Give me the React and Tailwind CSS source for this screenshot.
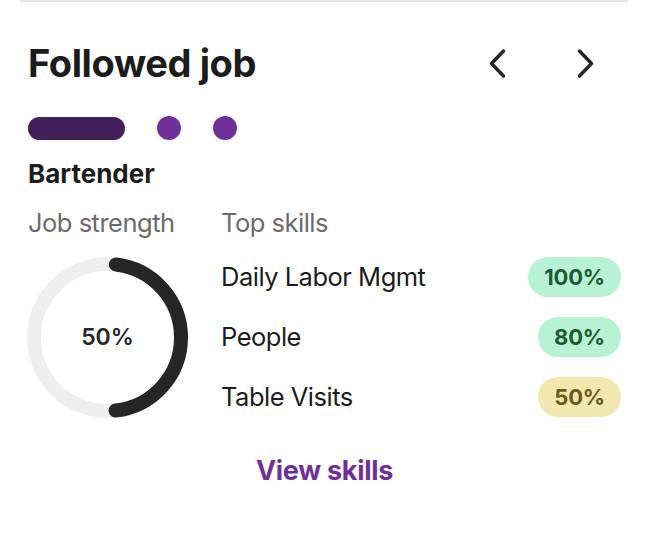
import React from 'react';

const skills = [
  { name: 'Daily Labor Mgmt', pct: '100%', tone: 'green' },
  { name: 'People', pct: '80%', tone: 'green' },
  { name: 'Table Visits', pct: '50%', tone: 'yellow' },
];

function Ring({ value }) {
  const r = 73.5;
  const c = 2 * Math.PI * r;
  // keep the round caps inside the filled half
  const inset = 8.5;
  return (
    <div className="relative w-[161px] h-[161px]">
      <svg width="161" height="161" viewBox="0 0 161 161">
        <circle cx="80.5" cy="80.5" r={r} fill="none" stroke="#eeeeee" strokeWidth="14" />
        <circle
          cx="80.5"
          cy="80.5"
          r={r}
          fill="none"
          stroke="#262626"
          strokeWidth="14"
          strokeLinecap="round"
          strokeDasharray={`${c * value - inset * 2} ${c}`}
          strokeDashoffset={-inset}
          transform="rotate(-90 80.5 80.5)"
        />
      </svg>
      <div className="absolute inset-0 flex items-center justify-center text-[23px] font-semibold text-[#262626]">
        50%
      </div>
    </div>
  );
}

export default function App() {
  return (
    <div className="w-[648px] h-[535px] bg-white font-['Inter',sans-serif] text-[#1c1c1c]">
      {/* top divider */}
      <div className="mx-[20px] h-[2px] bg-[#e6e6e6]" />

      <div className="pl-[28px] pr-[27px]">
        {/* header */}
        <div className="flex items-center justify-between mt-[42px]">
          <h1 className="text-[38px] leading-[38px] font-bold tracking-[-0.4px]">Followed job</h1>
          <div className="flex items-center gap-[69px] pr-[25px]">
            <svg width="20" height="31" viewBox="0 0 20 31" fill="none" stroke="#262626" strokeWidth="3.5" strokeLinecap="round" strokeLinejoin="round">
              <path d="M16.5 3 L4.5 15.5 L16.5 28" />
            </svg>
            <svg width="20" height="31" viewBox="0 0 20 31" fill="none" stroke="#262626" strokeWidth="3.5" strokeLinecap="round" strokeLinejoin="round">
              <path d="M3.5 3 L15.5 15.5 L3.5 28" />
            </svg>
          </div>
        </div>

        {/* pager */}
        <div className="flex items-center mt-[34px]">
          <div className="w-[97px] h-[23px] rounded-full bg-[#43205c]" />
          <div className="w-[24px] h-[24px] rounded-full bg-[#6f3199] ml-[32px]" />
          <div className="w-[24px] h-[24px] rounded-full bg-[#6f3199] ml-[32px]" />
        </div>

        <h2 className="text-[26px] leading-[26px] font-bold mt-[21px]">Bartender</h2>

        <div className="flex mt-[23px]">
          <div className="w-[193px] flex flex-col">
            <div className="text-[25.5px] leading-[26px] text-[#6b6b6b] tracking-[-0.5px]">Job strength</div>
            <div className="mt-[21px] -ml-[1px]">
              <Ring value={0.5} />
            </div>
          </div>

          <div className="flex-1 flex flex-col">
            <div className="text-[25.5px] leading-[26px] text-[#6b6b6b] tracking-[-0.5px]">Top skills</div>
            <div className="flex flex-col gap-[20px] mt-[21px]">
              {skills.map((s) => (
                <div key={s.name} className="flex items-center justify-between h-[40px]">
                  <span className="text-[25.5px] leading-[26px] text-[#1c1c1c] tracking-[-0.5px]">{s.name}</span>
                  <span
                    className={
                      s.tone === 'green'
                        ? 'h-[40px] px-[16px] rounded-full bg-[#b7f2d4] text-[#1a5b34] text-[22px] font-bold tracking-[-0.2px] flex items-center justify-center'
                        : 'h-[40px] px-[16px] rounded-full bg-[#f3e7b0] text-[#6b5a1a] text-[22px] font-bold tracking-[-0.2px] flex items-center justify-center'
                    }
                  >
                    {s.pct}
                  </span>
                </div>
              ))}
            </div>
          </div>
        </div>

        <div className="flex justify-center mt-[39px]">
          <button className="text-[27px] leading-[27px] font-bold text-[#6f3199] tracking-[-0.3px]">View skills</button>
        </div>
      </div>
    </div>
  );
}
